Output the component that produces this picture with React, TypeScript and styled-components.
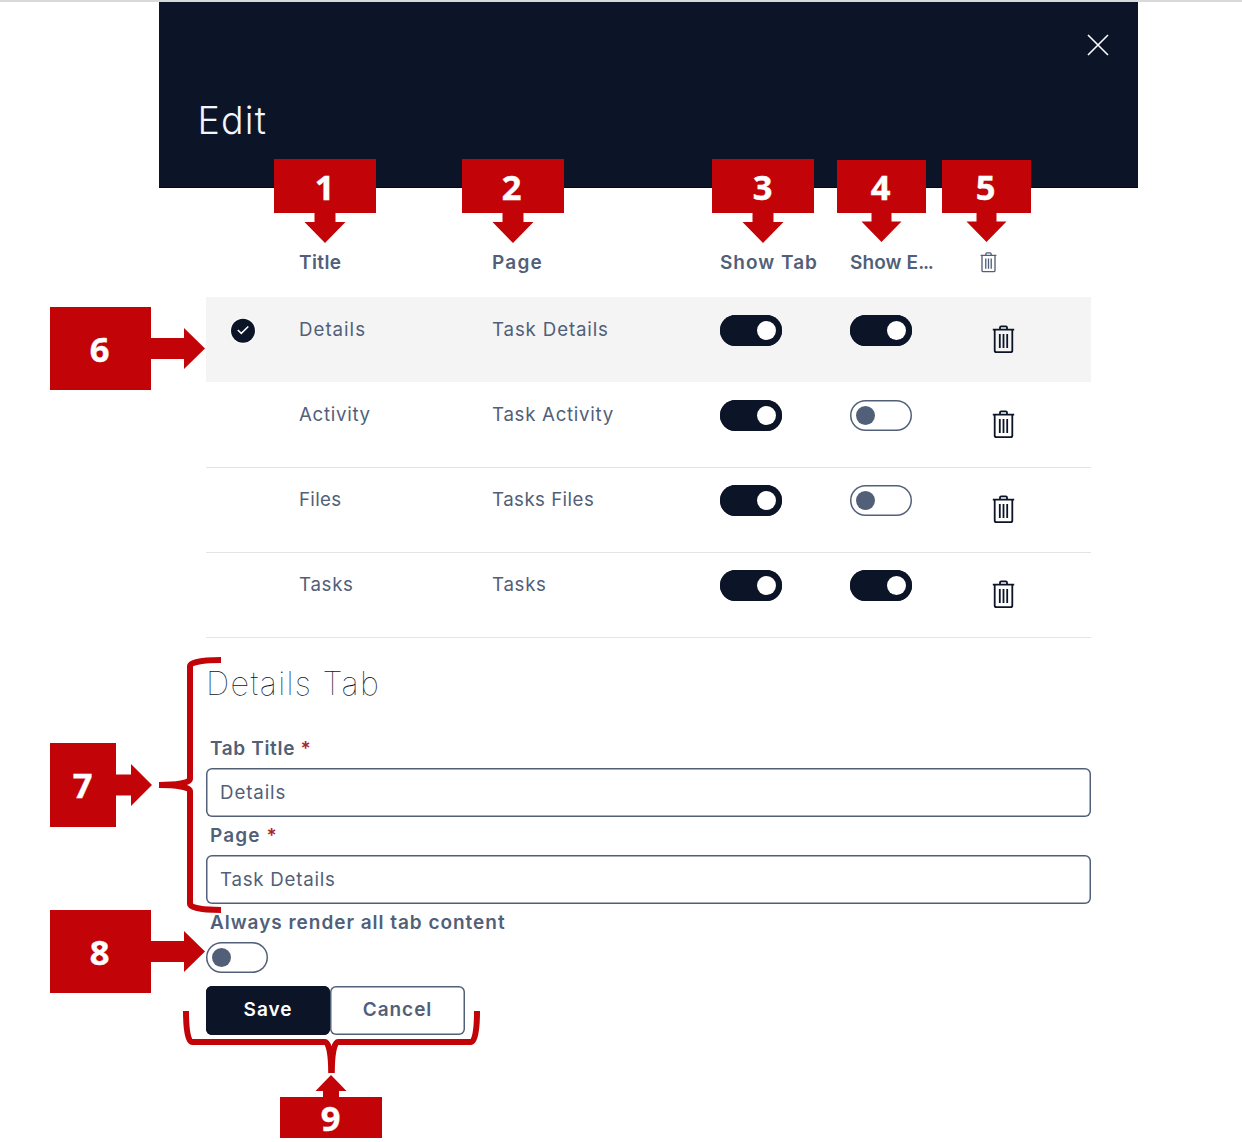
import React, { useState } from "react";
import styled, { createGlobalStyle } from "styled-components";

const navy = "#0c1528";
const slate = "#525f79";
const red = "#c20408";

const Global = createGlobalStyle`
  * { box-sizing: border-box; }
  body { margin: 0; background: #fff; font-family: Inter, "Open Sans", sans-serif; color: ${slate}; }
`;

const Page = styled.div`
  position: relative;
  width: 1242px;
  height: 1142px;
  overflow: hidden;
  border-top: 2px solid #d9d9db;
`;

const Modal = styled.main`
  width: 979px;
  margin-left: 159px;
`;

const Header = styled.header`
  height: 186px;
  padding: 32px 29px 0 38.5px;
  background: ${navy};
  border-bottom: 1px solid #030714;
  display: flex;
  flex-direction: column;
  justify-content: space-between;
`;

const Close = styled.button`
  align-self: flex-end;
  display: block;
  width: 22px;
  height: 22px;
  padding: 0;
  border: 0;
  background: none;
`;

const Heading = styled.h1`
  margin: 0 0 41px;
  font-size: 37.5px;
  line-height: 50px;
  font-weight: 350;
  letter-spacing: 1.2px;
  color: #f3f6fc;
`;

const Body = styled.div`
  padding: 0 47px;
`;

const Columns = styled.div`
  display: grid;
  grid-template-columns: 93px 193px 228px 130px 130px 1fr;
`;

const TableHead = styled(Columns)`
  height: 110px;
  padding-top: 62px;
  font-size: 19px;
  line-height: 26px;
  font-weight: 600;
`;

const HeadCell = styled.span<{ $track: number }>`
  letter-spacing: ${(p) => p.$track}px;
  white-space: nowrap;
`;

const Dots = styled.span`
  letter-spacing: -1.3px;
`;

const Row = styled(Columns)<{ $selected?: boolean }>`
  height: 85px;
  border-bottom: 1px solid ${(p) => (p.$selected ? "transparent" : "#e3e4e6")};
  background: ${(p) => (p.$selected ? "#f4f4f4" : "#fff")} padding-box;
  box-shadow: ${(p) => (p.$selected ? "0 -1px #f4f4f4" : "none")};
`;

const Cell = styled.span<{ $track: number }>`
  padding-top: 19px;
  font-size: 18.7px;
  line-height: 26px;
  letter-spacing: ${(p) => p.$track}px;
`;

const Slot = styled.div<{ $top: number; $left?: number }>`
  padding: ${(p) => p.$top}px 0 0 ${(p) => p.$left ?? 0}px;
  line-height: 0;
`;

const Track = styled.button<{ $on: boolean }>`
  display: flex;
  align-items: center;
  justify-content: ${(p) => (p.$on ? "flex-end" : "flex-start")};
  width: 62px;
  height: 31px;
  padding: 0 6px;
  border: 0;
  border-radius: 16px;
  background: ${(p) => (p.$on ? navy : "#fff")};
  box-shadow: inset 0 0 0 1.5px ${(p) => (p.$on ? navy : slate)};
`;

const Knob = styled.span<{ $on: boolean }>`
  width: 19px;
  height: 19px;
  border-radius: 50%;
  background: ${(p) => (p.$on ? "#fff" : slate)};
`;

const TabHeading = styled.h2`
  margin: 0;
  height: 91px;
  padding-top: 26px;
  font-size: 32.5px;
  line-height: 39px;
  font-weight: 100;
  letter-spacing: 1.3px;
  color: ${navy};
`;

const Label = styled.label<{ $track: number; $height: number }>`
  display: block;
  height: ${(p) => p.$height}px;
  padding-left: 4px;
  font-size: 19px;
  line-height: ${(p) => p.$height * 2 - 39}px;
  font-weight: 600;
  letter-spacing: ${(p) => p.$track}px;
`;

const Star = styled.span`
  color: #a8262f;
`;

const Input = styled.input<{ $track: number }>`
  display: block;
  width: 100%;
  height: 49px;
  padding: 0 14px;
  border: 0;
  border-radius: 6px;
  box-shadow: inset 0 0 0 1.5px ${slate};
  background: #fff;
  color: ${slate};
  font: 400 18.7px Inter, sans-serif;
  letter-spacing: ${(p) => p.$track}px;
  outline: 0;
`;

const Actions = styled.div`
  display: flex;
  margin-top: 13px;
`;

const Button = styled.button<{ $primary?: boolean }>`
  width: ${(p) => (p.$primary ? 124 : 135)}px;
  height: 49px;
  padding: 0 0 2px;
  border: 0;
  border-radius: 6px;
  box-shadow: inset 0 0 0 1.5px ${(p) => (p.$primary ? navy : slate)};
  background: ${(p) => (p.$primary ? navy : "#fff")};
  color: ${(p) => (p.$primary ? "#fff" : slate)};
  font: 600 19px Inter, sans-serif;
  letter-spacing: 0.95px;
`;

const Overlay = styled.svg`
  position: absolute;
  left: 0;
  top: -2px;
  pointer-events: none;
`;

const Marker = styled.div<{ $x: number; $y: number; $w: number; $h: number; $dx: number; $dy: number }>`
  position: absolute;
  left: ${(p) => p.$x}px;
  top: ${(p) => p.$y - 2}px;
  width: ${(p) => p.$w}px;
  height: ${(p) => p.$h}px;
  padding: ${(p) => p.$dy - 1}px 0 0 ${(p) => p.$dx}px;
  background: ${red};
  color: #fff;
  font: 700 34.5px/26px "Noto Sans", "Open Sans", sans-serif;
  -webkit-text-stroke: 0.4px #fff;
`;

const Digit = styled.span`
  display: block;
  width: 20px;
  text-align: center;
`;

function Trash({ small }: { small?: boolean }) {
  return (
    <svg width={small ? 17 : 23} height={small ? 21 : 29} viewBox="0 0 23 29" fill="none"
      stroke={small ? slate : navy} strokeWidth="1.8" preserveAspectRatio="none">
      <path d="M.8 4.7H22.2M2.7 4.7V25.5Q2.7 27.2 4.4 27.2H18.6Q20.3 27.2 20.3 25.5V4.7M8 4.7V2.5Q8 1.3 9.2 1.3H13.8Q15 1.3 15 2.5V4.7M7.8 9V23M11.5 9V23M15.2 9V23" />
    </svg>
  );
}

function Check() {
  return (
    <svg width="26" height="26" viewBox="0 0 26 26" fill="none">
      <circle cx="13" cy="12.7" r="13" fill="#fff" />
      <circle cx="13" cy="12.7" r="12" fill={navy} />
      <path d="M7.8 12 11.3 15.4 18.3 8.5" stroke="#fff" strokeWidth="1.5" />
    </svg>
  );
}

function Toggle({ initial }: { initial: boolean }) {
  const [on, setOn] = useState(initial);
  return (
    <Track $on={on} role="switch" aria-checked={on} onClick={() => setOn(!on)}>
      <Knob $on={on} />
    </Track>
  );
}

const rows = [
  { title: "Details", page: "Task Details", expand: true, selected: true, t: 1, p: 0.85 },
  { title: "Activity", page: "Task Activity", expand: false, t: 0.7, p: 0.7 },
  { title: "Files", page: "Tasks Files", expand: false, t: 0.3, p: 0.45 },
  { title: "Tasks", page: "Tasks", expand: true, t: 0.7, p: 0.7 },
];

const markers = [
  { n: 1, x: 274, y: 159, w: 102, h: 54.4, dx: 40.5, dy: 16 },
  { n: 2, x: 462, y: 159, w: 102, h: 54.4, dx: 39.5, dy: 16 },
  { n: 3, x: 712, y: 159, w: 102, h: 54.4, dx: 40.5, dy: 16 },
  { n: 4, x: 837, y: 160, w: 89, h: 53.4, dx: 33.5, dy: 15 },
  { n: 5, x: 942, y: 160, w: 89, h: 53.4, dx: 33.5, dy: 15 },
  { n: 6, x: 50, y: 307, w: 100.7, h: 83, dx: 39.5, dy: 30 },
  { n: 7, x: 50, y: 743, w: 66.2, h: 84, dx: 22.5, dy: 30 },
  { n: 8, x: 50, y: 910, w: 100.7, h: 83, dx: 39.5, dy: 30 },
  { n: 9, x: 280, y: 1097, w: 102, h: 41, dx: 40.5, dy: 9 },
];

function Arrows() {
  return (
    <Overlay width="1242" height="1142" fill={red}>
      {[325, 513, 763].map((x) => (
        <path key={x} d={`M${x - 10.5} 213h21v9h10L${x} 243 ${x - 20.5} 222h10z`} />
      ))}
      {[881.5, 986.5].map((x) => (
        <path key={x} d={`M${x - 10} 213h20v8.5h10L${x} 242 ${x - 20} 221.5h10z`} />
      ))}
      {[348.5, 951.5].map((y) => (
        <path key={y} d={`M150 ${y - 10.5}h34v-10L205 ${y} 184 ${y + 20.5}v-10h-34z`} />
      ))}
      <path d="M116 774.5h15v-10.5L152 785 131 806v-10.5h-15z" />
      <path d="M323 1098v-7h-7.5L331 1075 346.5 1091H339v7z" />
      <g fill="none" stroke={red} strokeWidth="6">
        <path d="M221 660C204 660 190 662 190 666V779C190 783 176 785 159 785C176 785 190 787 190 791V904C190 908 204 910 221 910" />
        <path d="M186 1011C186 1030 188 1042 192 1042H325C329 1042 331.2 1055 331.2 1073M331.8 1073C331.8 1055 334 1042 338 1042H471C475 1042 477 1030 477 1011" />
      </g>
    </Overlay>
  );
}

export default function App() {
  return (
    <Page>
      <Global />
      <Modal>
        <Header>
          <Close aria-label="Close">
            <svg width="22" height="22" fill="none" stroke="#fff" strokeWidth="1.6">
              <path d="M1 1 21 21M21 1 1 21" />
            </svg>
          </Close>
          <Heading>Edit</Heading>
        </Header>
        <Body>
          <TableHead>
            <span />
            <HeadCell $track={0.4}>Title</HeadCell>
            <HeadCell $track={1.2}>Page</HeadCell>
            <HeadCell $track={1}>Show Tab</HeadCell>
            <HeadCell $track={0.1}>Show E<Dots>...</Dots></HeadCell>
            <Slot $top={2}><Trash small /></Slot>
          </TableHead>
          {rows.map((r) => (
            <Row key={r.title} $selected={r.selected}>
              <Slot $top={20} $left={24}>{r.selected && <Check />}</Slot>
              <Cell $track={r.t}>{r.title}</Cell>
              <Cell $track={r.p}>{r.page}</Cell>
              <Slot $top={17.4}><Toggle initial /></Slot>
              <Slot $top={17.4}><Toggle initial={r.expand} /></Slot>
              <Slot $top={27} $left={12}><Trash /></Slot>
            </Row>
          ))}
          <TabHeading>Details Tab</TabHeading>
          <Label $track={0.65} $height={39}>Tab Title <Star>*</Star></Label>
          <Input $track={0.9} defaultValue="Details" />
          <Label $track={1.1} $height={38}>Page <Star>*</Star></Label>
          <Input $track={0.75} defaultValue="Task Details" />
          <Label $track={0.97} $height={38}>Always render all tab content</Label>
          <Toggle initial={false} />
          <Actions>
            <Button $primary>Save</Button>
            <Button>Cancel</Button>
          </Actions>
        </Body>
      </Modal>
      {markers.map((m) => (
        <Marker key={m.n} $x={m.x} $y={m.y} $w={m.w} $h={m.h} $dx={m.dx} $dy={m.dy}>
          <Digit>{m.n}</Digit>
        </Marker>
      ))}
      <Arrows />
    </Page>
  );
}
